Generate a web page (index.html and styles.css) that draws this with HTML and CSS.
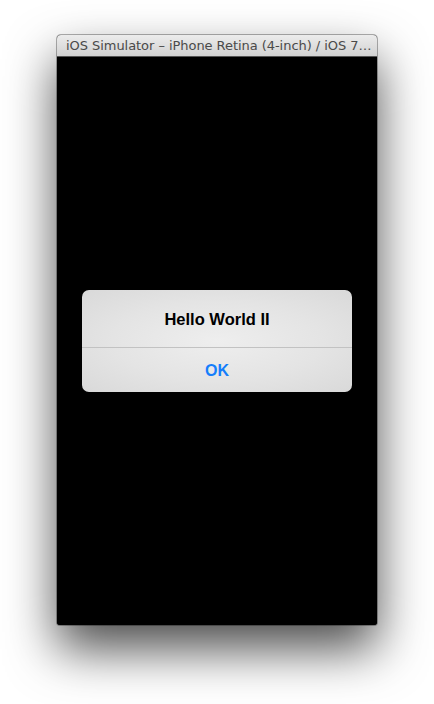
FILE: index.html
```html
<!DOCTYPE html>
<html>
<head>
<meta charset="utf-8">
<link rel="stylesheet" href="styles.css">
</head>
<body>
<div class="page">
  <div class="window">
    <div class="titlebar">iOS Simulator – iPhone Retina (4-inch) / iOS 7…</div>
    <div class="screen">
      <div class="alert">
        <div class="alert-title">Hello World II</div>
        <div class="alert-button">OK</div>
      </div>
    </div>
  </div>
</div>
</body>
</html>
```
FILE: styles.css
```css
html, body {
  margin: 0;
  padding: 0;
  background: #ffffff;
}
.page {
  width: 434px;
  height: 704px;
  overflow: hidden;
  display: flex;
  justify-content: center;
  padding-top: 35px;
  box-sizing: border-box;
}
.window {
  width: 320px;
  height: 590px;
  display: flex;
  flex-direction: column;
  border-radius: 4px 4px 3px 3px;
  box-shadow: 0 24px 50px rgba(0, 0, 0, 0.7), 0 0 0 1px rgba(0, 0, 0, 0.3);
  overflow: hidden;
  background: #000;
}
.titlebar {
  height: 22px;
  box-sizing: border-box;
  background: linear-gradient(#ececec, #d2d2d2);
  border-bottom: 1px solid #555;
  font-family: "DejaVu Sans", sans-serif;
  font-size: 13px;
  color: #4a4a4a;
  line-height: 21px;
  padding-left: 9px;
  white-space: nowrap;
  overflow: hidden;
  letter-spacing: -0.05px;
}
.screen {
  flex: 1;
  background: #000;
  display: flex;
  align-items: center;
  justify-content: center;
}
.alert {
  width: 270px;
  height: 102px;
  border-radius: 7px;
  background: radial-gradient(ellipse at center, #eeeeee 0%, #e4e4e4 55%, #d9d9d9 100%);
  display: flex;
  flex-direction: column;
  font-family: "Liberation Sans", Arial, sans-serif;
}
.alert-title {
  height: 58px;
  box-sizing: border-box;
  border-bottom: 1px solid #c2c2c2;
  display: flex;
  align-items: center;
  justify-content: center;
  font-weight: bold;
  font-size: 16.5px;
  color: #000;
  padding-top: 2px;
}
.alert-button {
  flex: 1;
  display: flex;
  align-items: center;
  justify-content: center;
  font-weight: bold;
  font-size: 16px;
  color: #147efb;
  padding-top: 1px;
}
```
